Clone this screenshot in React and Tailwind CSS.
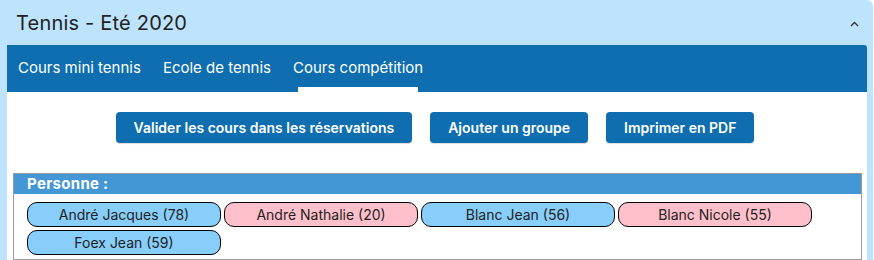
import React from "react";

const tabs = ["Cours mini tennis", "Ecole de tennis", "Cours compétition"];
const buttons = ["Valider les cours dans les réservations", "Ajouter un groupe", "Imprimer en PDF"];
const people = [
    { name: "André Jacques (78)", sex: "m" },
    { name: "André Nathalie (20)", sex: "f" },
    { name: "Blanc Jean (56)", sex: "m" },
    { name: "Blanc Nicole (55)", sex: "f" },
    { name: "Foex Jean (59)", sex: "m" },
];

export default function App() {
    return (
        <div className="w-[873px] h-[260px] overflow-hidden bg-[#bee3fc] rounded-tr-[6px] font-['Inter',sans-serif]">
            <div className="h-[45px] flex items-center justify-between pl-4 pr-[14px]">
                <span className="text-[20px] text-[#222] tracking-[0.2px]">Tennis - Eté 2020</span>
                <svg width="9" height="6" viewBox="0 0 9 6" className="mt-[2px]">
                    <path d="M1 5 L4.5 1.5 L8 5" fill="none" stroke="#333" strokeWidth="1.4" />
                </svg>
            </div>
            <div className="mx-[7px] mr-[6px]">
                <div className="h-[47px] bg-[#0e6eb0] rounded-tr-[3px] flex items-stretch">
                    {tabs.map((t, i) => (
                        <div key={t} className="relative flex items-center px-[11px] text-white text-[15px]">
                            {t}
                            {i === 2 && <div className="absolute bottom-0 left-4 right-4 h-[5px] bg-white" />}
                        </div>
                    ))}
                </div>
                <div className="bg-white pt-5 px-[6px] pr-[5px] h-[200px]">
                    <div className="flex justify-center gap-[18px] pr-[5px]">
                        {buttons.map((b) => (
                            <button key={b} className="h-[31px] px-[18px] rounded-[4px] bg-[#0e6eb0] text-white text-[14px] font-semibold shadow-[0_1px_1px_rgba(0,0,0,0.15)]">
                                {b}
                            </button>
                        ))}
                    </div>
                    <div className="mt-[30px] border border-[#9a9a9a]">
                        <div className="h-5 bg-[#4297d4] text-white text-[15px] font-bold leading-5 pl-[13px] tracking-[0.3px]">Personne :</div>
                        <div className="grid grid-cols-[repeat(4,194px)] gap-[3px] px-[13px] pt-2 pb-1">
                            {people.map((p) => (
                                <div
                                    key={p.name}
                                    className={`h-[25px] rounded-[10px] border border-black flex items-center justify-center text-[14px] text-[#222] ${p.sex === "m" ? "bg-[#87cefa]" : "bg-[#ffc0cb]"}`}
                                >
                                    {p.name}
                                </div>
                            ))}
                        </div>
                    </div>
                </div>
            </div>
        </div>
    );
}
